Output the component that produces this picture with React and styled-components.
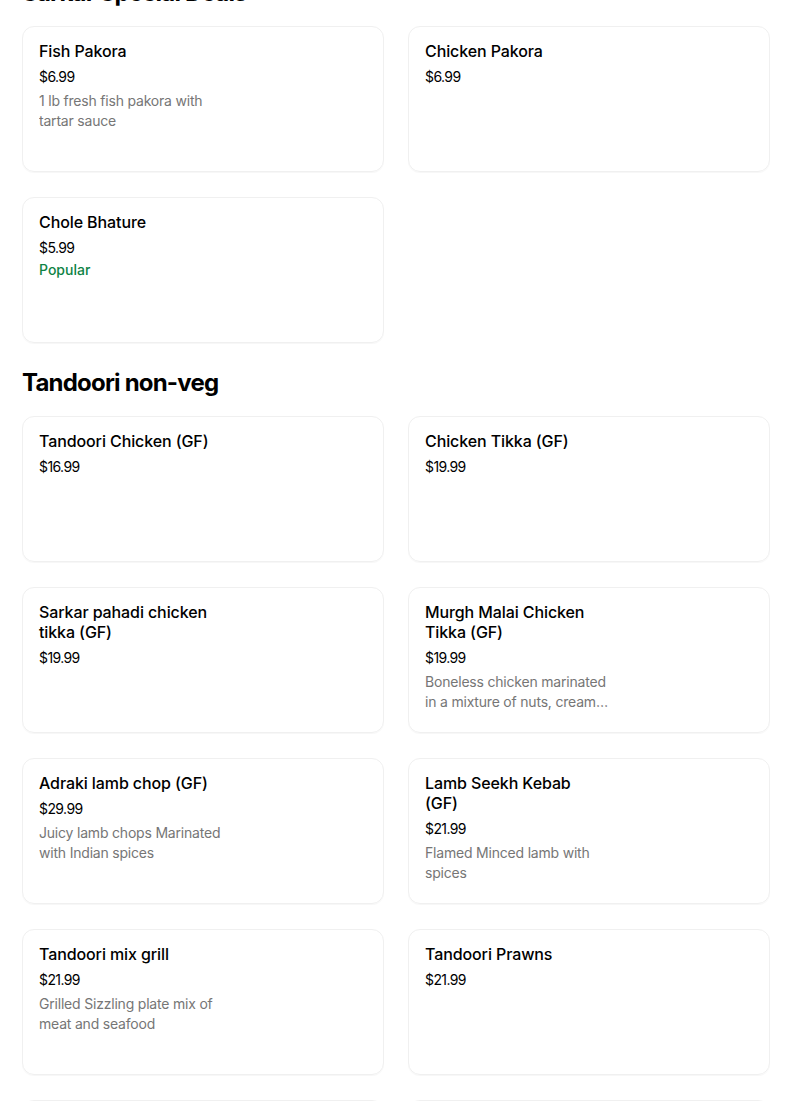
import React from "react";
import styled, { createGlobalStyle } from "styled-components";

const Global = createGlobalStyle`
  html, body { margin: 0; padding: 0; background: #fff; }
  body { font-family: Inter, "Noto Sans", Arial, sans-serif; color: #000; -webkit-font-smoothing: antialiased; }
  * { box-sizing: border-box; }
`;

const Page = styled.main`
  margin-top: -23px;
  padding: 0 34px 0 22px;
  display: flex;
  flex-direction: column;
  gap: 24px;
`;

const Section = styled.section`
  display: flex;
  flex-direction: column;
  gap: 17px;
`;

const Heading = styled.h2`
  margin: 0;
  font-family: Inter, sans-serif;
  font-size: 24px;
  line-height: 32px;
  font-weight: 700;
  letter-spacing: -0.8px;
`;

const Grid = styled.div`
  display: grid;
  grid-template-columns: 362px 362px;
  column-gap: 24px;
  row-gap: 25px;
`;

const Card = styled.div`
  height: 146px;
  border: 1px solid #f0f0f0;
  border-radius: 12px;
  box-shadow: 0 1px 1px rgba(0, 0, 0, 0.035);
  padding: 14px 16px;
  display: flex;
`;

const Info = styled.div`
  width: 186px;
  display: flex;
  flex-direction: column;
`;

const Title = styled.div`
  max-width: 178px;
  font-size: 16px;
  line-height: 20px;
  font-weight: 500;
  letter-spacing: -0.1px;
  color: #000;
`;

const Price = styled.div`
  margin-top: 6px;
  font-size: 14px;
  line-height: 20px;
  letter-spacing: -0.6px;
  color: #000;
`;

const Desc = styled.div`
  margin-top: 4px;
  font-size: 14px;
  line-height: 20px;
  color: #767676;
  letter-spacing: -0.2px;
  display: -webkit-box;
  -webkit-line-clamp: 2;
  -webkit-box-orient: vertical;
  overflow: hidden;
`;

const Tag = styled.div`
  margin-top: 2px;
  font-size: 14px;
  line-height: 20px;
  font-weight: 500;
  color: #0e8345;
`;

const sections = [
  {
    title: "Sarkar Special Deals",
    items: [
      { name: "Fish Pakora", price: "$6.99", desc: "1 lb fresh fish pakora with tartar sauce" },
      { name: "Chicken Pakora", price: "$6.99" },
      { name: "Chole Bhature", price: "$5.99", tag: "Popular" },
    ],
  },
  {
    title: "Tandoori non-veg",
    items: [
      { name: "Tandoori Chicken (GF)", price: "$16.99" },
      { name: "Chicken Tikka (GF)", price: "$19.99" },
      { name: "Sarkar pahadi chicken tikka (GF)", price: "$19.99" },
      {
        name: "Murgh Malai Chicken Tikka (GF)",
        price: "$19.99",
        desc: "Boneless chicken marinated in a mixture of nuts, cream and mild spices",
      },
      { name: "Adraki lamb chop (GF)", price: "$29.99", desc: "Juicy lamb chops Marinated with Indian spices" },
      { name: "Lamb Seekh Kebab (GF)", price: "$21.99", desc: "Flamed Minced lamb with spices" },
      { name: "Tandoori mix grill", price: "$21.99", desc: "Grilled Sizzling plate mix of meat and seafood" },
      { name: "Tandoori Prawns", price: "$21.99" },
      { name: "Fish Tikka (GF)", price: "$21.99" },
      { name: "Tandoori Lamb Chops", price: "$29.99" },
    ],
  },
];

function Item({ item }) {
  return (
    <Card>
      <Info>
        <Title>{item.name}</Title>
        <Price>{item.price}</Price>
        {item.desc && <Desc>{item.desc}</Desc>}
        {item.tag && <Tag>{item.tag}</Tag>}
      </Info>
    </Card>
  );
}

export default function App() {
  return (
    <>
      <Global />
      <Page>
        {sections.map((s) => (
          <Section key={s.title}>
            <Heading>{s.title}</Heading>
            <Grid>
              {s.items.map((it) => (
                <Item key={it.name} item={it} />
              ))}
            </Grid>
          </Section>
        ))}
      </Page>
    </>
  );
}
